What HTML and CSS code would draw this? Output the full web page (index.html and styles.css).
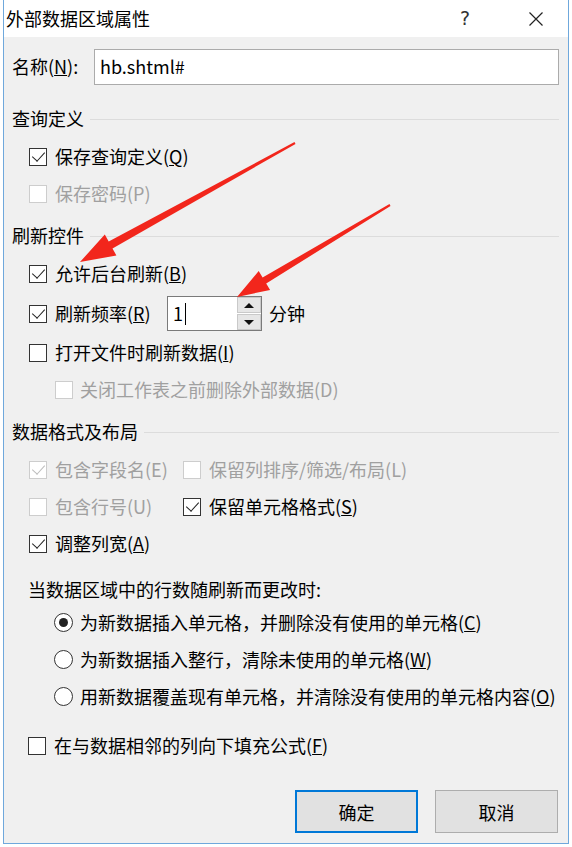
FILE: index.html
```html
<!DOCTYPE html>
<html lang="zh-CN">

<head>
  <meta charset="UTF-8">
  <meta name="viewport" content="width=device-width, initial-scale=1.0">
  <title>外部数据区域属性</title>
  <link rel="stylesheet" href="styles.css">
</head>

<body>
  <div class="window">
    <div class="titlebar">
      <span class="title">外部数据区域属性</span>
      <span class="help">?</span>
      <span class="close">
        <svg width="16" height="16" viewBox="0 0 16 16">
          <path d="M1.5 1.5 L14.5 14.5 M14.5 1.5 L1.5 14.5" stroke="#222" stroke-width="1.2" fill="none" />
        </svg>
      </span>
    </div>

    <div class="content">
      <div class="name-row">
        <span class="name-label">名称(<u>N</u>):</span>
        <div class="name-input">hb.shtml#</div>
      </div>

      <div class="group-head"><span>查询定义</span><i class="rule"></i></div>
      <div class="row">
        <span class="cb on"></span><span>保存查询定义(<u>Q</u>)</span>
      </div>
      <div class="row disabled">
        <span class="cb"></span><span>保存密码(P)</span>
      </div>

      <div class="group-head"><span>刷新控件</span><i class="rule"></i></div>
      <div class="row">
        <span class="cb on"></span><span>允许后台刷新(<u>B</u>)</span>
      </div>
      <div class="row row-spin">
        <span class="cb on"></span><span class="freq-label">刷新频率(<u>R</u>)</span>
        <div class="spin">
          <div class="spin-val">1<i class="caret"></i></div>
          <div class="spin-btns">
            <div class="spin-btn"><i class="tri up"></i></div>
            <div class="spin-btn"><i class="tri down"></i></div>
          </div>
        </div>
        <span class="unit">分钟</span>
      </div>
      <div class="row row-tight">
        <span class="cb"></span><span>打开文件时刷新数据(<u>I</u>)</span>
      </div>
      <div class="row sub disabled">
        <span class="cb"></span><span>关闭工作表之前删除外部数据(D)</span>
      </div>

      <div class="group-head"><span>数据格式及布局</span><i class="rule"></i></div>
      <div class="row-grid">
        <div class="row disabled">
          <span class="cb on"></span><span>包含字段名(E)</span>
        </div>
        <div class="row disabled">
          <span class="cb"></span><span>保留列排序/筛选/布局(L)</span>
        </div>
        <div class="row disabled">
          <span class="cb"></span><span>包含行号(U)</span>
        </div>
        <div class="row">
          <span class="cb on"></span><span>保留单元格格式(<u>S</u>)</span>
        </div>
      </div>
      <div class="row">
        <span class="cb on"></span><span>调整列宽(<u>A</u>)</span>
      </div>

      <div class="note">当数据区域中的行数随刷新而更改时:</div>
      <div class="row radio-row">
        <span class="rb on"></span><span>为新数据插入单元格，并删除没有使用的单元格(<u>C</u>)</span>
      </div>
      <div class="row radio-row">
        <span class="rb"></span><span>为新数据插入整行，清除未使用的单元格(<u>W</u>)</span>
      </div>
      <div class="row radio-row">
        <span class="rb"></span><span>用新数据覆盖现有单元格，并清除没有使用的单元格内容(<u>O</u>)</span>
      </div>

      <div class="row fill-row">
        <span class="cb"></span><span>在与数据相邻的列向下填充公式(<u>F</u>)</span>
      </div>

      <div class="actions">
        <button class="btn default">确定</button>
        <button class="btn">取消</button>
      </div>
    </div>
  </div>

  <svg class="arrows" width="572" height="847" viewBox="0 0 572 847">
    <polygon fill="#f2261c" points="80,262 116.4,255.6 112.5,248.5 295.5,143.9 294.5,142.1 108.7,241.5 104.8,234.6" />
    <polygon fill="#f2261c" points="237,297 270.1,289.9 266.2,283.5 390.5,205.9 389.5,204.1 262.6,277.5 258.7,271.1" />
  </svg>
</body>

</html>
```

FILE: styles.css
```css
body {
  margin: 0;
  width: 572px;
  height: 847px;
  overflow: hidden;
  position: relative;
  background-color: #fff;
  font-family: "Noto Sans CJK SC", "Noto Sans", sans-serif;
  font-size: 18px;
  color: #000;
}

.window {
  margin-left: 3px;
  width: 564px;
  height: 843px;
  border: 1px solid #6fa8dc;
  border-top: none;
  background-color: #f0f0f0;
  display: flex;
  flex-direction: column;
}

.titlebar {
  height: 37px;
  background-color: #fff;
  display: flex;
  align-items: center;
  padding-left: 2px;
  padding-right: 10px;
  line-height: 1.2;
}

.title {
  flex: 1;
}

.help {
  width: 24px;
  margin-right: 37px;
  text-align: center;
  font-family: "DejaVu Sans", sans-serif;
  font-size: 19px;
  color: #333;
}

.close {
  width: 44px;
  display: flex;
  justify-content: center;
}

.content {
  display: flex;
  flex-direction: column;
  padding: 0 9px 0 8px;
  line-height: 1.2;
  white-space: nowrap;
}

.name-row {
  display: flex;
  align-items: center;
  height: 36px;
  margin: 12px 0 10px;
}

.name-label {
  width: 82px;
}

.name-input {
  flex: 1;
  height: 36px;
  box-sizing: border-box;
  border: 1px solid #ababab;
  background-color: #fff;
  padding-left: 5px;
  display: flex;
  align-items: center;
}

.group-head {
  display: flex;
  align-items: center;
  height: 28px;
  margin: 10px 0 5px;
}

.group-head .rule {
  flex: 1;
  margin-left: 6px;
  border-top: 1px solid #dcdcdc;
}

.row {
  display: flex;
  align-items: center;
  height: 37px;
  padding-left: 17px;
}

.row.disabled {
  color: #a0a0a0;
}

.row.sub {
  padding-left: 43px;
}

.row.sub .cb {
  margin-right: 7px;
}

.row-spin {
  margin-top: 3px;
}

.row-tight {
  margin-top: 2px;
}

.row-grid {
  display: grid;
  grid-template-columns: 154px auto;
  padding-left: 17px;
}

.row-grid .row {
  padding-left: 0;
}

.cb {
  width: 18px;
  height: 18px;
  box-sizing: border-box;
  border: 1px solid #333;
  background-color: #fff;
  margin-right: 8px;
  flex-shrink: 0;
  position: relative;
}

.disabled .cb {
  border-color: #cdcdcd;
}

.cb.on::after {
  content: "";
  position: absolute;
  left: 5px;
  top: 0;
  width: 6px;
  height: 11px;
  border-right: 1.5px solid #222;
  border-bottom: 1.5px solid #222;
  transform: rotate(42deg);
}

.disabled .cb.on::after {
  border-color: #bcbcbc;
}

.freq-label {
  width: 112px;
}

.spin {
  width: 95px;
  height: 35px;
  box-sizing: border-box;
  border: 1px solid #7a7a7a;
  background-color: #fff;
  display: flex;
}

.spin-val {
  flex: 1;
  padding-left: 5px;
  display: flex;
  align-items: center;
}

.caret {
  width: 1px;
  height: 22px;
  background-color: #000;
  margin-left: 2px;
}

.spin-btns {
  width: 24px;
  display: flex;
  flex-direction: column;
  gap: 1px;
}

.spin-btn {
  flex: 1;
  background-color: #e6e6e6;
  border: 1px solid #c9c9c9;
  display: flex;
  align-items: center;
  justify-content: center;
}

.tri {
  width: 0;
  height: 0;
  border-left: 5px solid transparent;
  border-right: 5px solid transparent;
}

.tri.up {
  border-bottom: 5px solid #111;
}

.tri.down {
  border-top: 5px solid #111;
}

.unit {
  margin-left: 7px;
}

.note {
  height: 28px;
  margin-top: 14px;
  padding-left: 16px;
  display: flex;
  align-items: center;
}

.radio-row {
  padding-left: 42px;
}

.rb {
  width: 19px;
  height: 19px;
  box-sizing: border-box;
  border: 1px solid #333;
  border-radius: 50%;
  background-color: #fff;
  margin-right: 7px;
  display: flex;
  align-items: center;
  justify-content: center;
}

.rb.on::after {
  content: "";
  width: 9px;
  height: 9px;
  border-radius: 50%;
  background-color: #222;
}

.fill-row {
  margin-top: 12px;
  padding-left: 16px;
}

.actions {
  display: flex;
  justify-content: flex-end;
  gap: 17px;
  margin-top: 26px;
  margin-right: 1px;
}

.btn {
  width: 123px;
  height: 43px;
  box-sizing: border-box;
  border: 1px solid #adadad;
  background-color: #e1e1e1;
  font-family: inherit;
  font-size: 18px;
  color: #000;
  padding: 0;
}

.btn.default {
  border: 2px solid #0078d7;
}

.arrows {
  position: absolute;
  top: 0;
  left: 0;
  pointer-events: none;
}
```
